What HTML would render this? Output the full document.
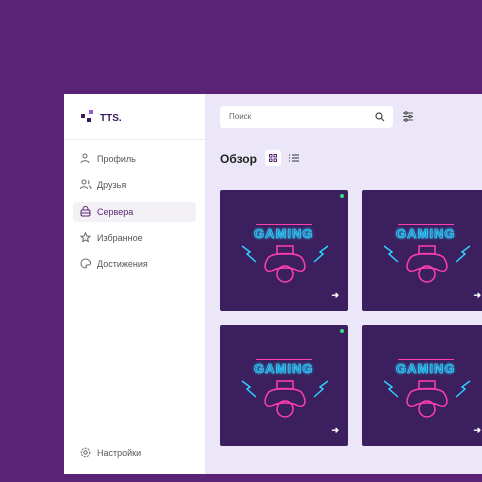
<!DOCTYPE html><html><head><style>
body{margin:0;width:482px;height:482px;background:#5b2376;position:relative;overflow:hidden;font-family:"Liberation Sans",sans-serif}
.panel{position:absolute;left:64px;top:94px;width:418px;height:380px;background:#ebe7f8;overflow:hidden}
.side{position:absolute;left:0;top:0;width:141px;height:380px;background:#fff}
.logo{position:absolute;left:17px;top:16px;height:14px;font-weight:bold;font-size:10px;color:#3c1a5a}
.logo i{position:absolute;width:4px;height:4px;background:#3c1a5a}
.hr{position:absolute;left:0;top:45px;width:141px;height:1px;background:#f0eef4}
.item{position:absolute;left:9px;width:123px;height:20px;font-size:9px;color:#555;line-height:20px}
.item span{position:absolute;left:24px}
.item svg{position:absolute;left:7px;top:4px}
.act{background:#f3f1f6;border-radius:4px;color:#5b2376}
.search{position:absolute;left:156px;top:12px;width:173px;height:22px;background:#fff;border-radius:3px;font-size:8px;color:#666;line-height:22px}
.card{position:absolute;width:128px;height:121px;background:#3b1f5e;border-radius:2px}
.dot{position:absolute;right:4px;top:4px;width:4px;height:4px;background:#2ee07a;border-radius:50%}
.arr{position:absolute;right:9px;bottom:10px;color:#fff;font-size:9px;font-weight:bold}
.g{position:absolute;left:34px;top:36px;color:#3a6fa8;font-size:13px;font-weight:bold;letter-spacing:1px;-webkit-text-stroke:0.8px #2ad0ff;text-shadow:0 0 3px #2ad0ff}
</style></head><body>
<div class="panel">
<div class="side">
<div class="logo"><i style="left:0;top:4px"></i><i style="left:8px;top:0;background:#9b59d0"></i><i style="left:6px;top:8px"></i><span style="position:absolute;left:19px;top:3px">TTS.</span></div>
<div class="hr"></div>
<div class="item" style="top:55px"><svg width="10" height="11" viewBox="0 0 10 11" fill="none" stroke="#666"><circle cx="5" cy="3" r="2"/><path d="M1 10c0-3 8-3 8 0"/></svg><span>Профиль</span></div>
<div class="item" style="top:81px"><svg width="12" height="11" viewBox="0 0 12 11" fill="none" stroke="#666"><circle cx="4" cy="3" r="2"/><path d="M0.5 10c0-3 7-3 7 0M8 1.5a2 2 0 0 1 0 3.5M9 7c1.5 .5 2 1.5 2 3"/></svg><span>Друзья</span></div>
<div class="item act" style="top:108px"><svg width="11" height="11" viewBox="0 0 11 11" fill="none" stroke="#5b2376"><rect x="1" y="4" width="9" height="6" rx="1.5"/><path d="M3 4V3a2.5 2.5 0 0 1 5 0v1M1 7h9"/></svg><span>Сервера</span></div>
<div class="item" style="top:134px"><svg width="11" height="11" viewBox="0 0 11 11" fill="none" stroke="#666"><path d="M5.5 1l1.4 3 3.1.3-2.4 2.1.7 3.1-2.8-1.6-2.8 1.6.7-3.1L1 4.3l3.1-.3z"/></svg><span>Избранное</span></div>
<div class="item" style="top:160px"><svg width="11" height="11" viewBox="0 0 11 11" fill="none" stroke="#666"><path d="M5.5 1a4.5 4.5 0 1 0 0 9c1 0 1-1 .5-1.5s0-1.5 1-1.5h1.5a2 2 0 0 0 2-2C10.5 3 8.3 1 5.5 1z"/></svg><span>Достижения</span></div>
<div class="item" style="top:349px"><svg width="11" height="11" viewBox="0 0 11 11" fill="none" stroke="#666"><circle cx="5.5" cy="5.5" r="1.7"/><circle cx="5.5" cy="5.5" r="4.3" stroke-dasharray="2 1.2"/></svg><span>Настройки</span></div>
</div>
<div class="search"><span style="margin-left:9px">Поиск</span><svg style="position:absolute;right:8px;top:6px" width="10" height="10" viewBox="0 0 10 10" fill="none" stroke="#444" stroke-width="1.2"><circle cx="4" cy="4" r="3"/><path d="M6.3 6.3L9 9"/></svg></div>
<svg style="position:absolute;left:338px;top:17px" width="12" height="11" viewBox="0 0 12 11" stroke="#444" stroke-width="1.1"><path d="M1 2h10M1 5.5h10M1 9h10"/><circle cx="4" cy="2" r="1.2" fill="#ebe7f8"/><circle cx="8" cy="5.5" r="1.2" fill="#ebe7f8"/><circle cx="4" cy="9" r="1.2" fill="#ebe7f8"/></svg>
<div style="position:absolute;left:156px;top:58px;font-size:12px;font-weight:bold;color:#222">Обзор</div>
<div style="position:absolute;left:201px;top:56px;width:16px;height:16px;background:#fff;border-radius:3px"><svg style="position:absolute;left:4px;top:4px" width="8" height="8" viewBox="0 0 8 8" fill="none" stroke="#5b2376"><rect x=".5" y=".5" width="2.5" height="2.5"/><rect x="5" y=".5" width="2.5" height="2.5"/><rect x=".5" y="5" width="2.5" height="2.5"/><rect x="5" y="5" width="2.5" height="2.5"/></svg></div>
<svg style="position:absolute;left:225px;top:60px" width="10" height="8" viewBox="0 0 10 8" stroke="#333"><path d="M0 1h1M3 1h7M0 4h1M3 4h7M0 7h1M3 7h7"/></svg>
<div class="card" style="left:156px;top:96px"><div class="dot"></div><div style="position:absolute;left:36px;top:34px;width:56px;height:1px;background:#ff3fb0"></div><div class="g">GAMING</div><svg style="position:absolute;left:20px;top:52px" width="90" height="44" viewBox="0 0 90 44" fill="none" stroke-width="1.5"><path d="M2 4l8 6-3 2 9 8M88 4l-8 6 3 2-9 8" stroke="#2ad0ff"/><path d="M28 16c4-6 30-6 34 0 6 10 2 16-6 12-4-2-8-2-11-2s-7 0-11 2c-8 4-12-2-6-12z" stroke="#ff3fb0"/><rect x="37" y="4" width="16" height="8" stroke="#ff3fb0"/><circle cx="45" cy="32" r="8" stroke="#ff3fb0"/></svg><div class="arr">➜</div></div>
<div class="card" style="left:298px;top:96px"><div class="dot"></div><div style="position:absolute;left:36px;top:34px;width:56px;height:1px;background:#ff3fb0"></div><div class="g">GAMING</div><svg style="position:absolute;left:20px;top:52px" width="90" height="44" viewBox="0 0 90 44" fill="none" stroke-width="1.5"><path d="M2 4l8 6-3 2 9 8M88 4l-8 6 3 2-9 8" stroke="#2ad0ff"/><path d="M28 16c4-6 30-6 34 0 6 10 2 16-6 12-4-2-8-2-11-2s-7 0-11 2c-8 4-12-2-6-12z" stroke="#ff3fb0"/><rect x="37" y="4" width="16" height="8" stroke="#ff3fb0"/><circle cx="45" cy="32" r="8" stroke="#ff3fb0"/></svg><div class="arr">➜</div></div>
<div class="card" style="left:156px;top:231px"><div class="dot"></div><div style="position:absolute;left:36px;top:34px;width:56px;height:1px;background:#ff3fb0"></div><div class="g">GAMING</div><svg style="position:absolute;left:20px;top:52px" width="90" height="44" viewBox="0 0 90 44" fill="none" stroke-width="1.5"><path d="M2 4l8 6-3 2 9 8M88 4l-8 6 3 2-9 8" stroke="#2ad0ff"/><path d="M28 16c4-6 30-6 34 0 6 10 2 16-6 12-4-2-8-2-11-2s-7 0-11 2c-8 4-12-2-6-12z" stroke="#ff3fb0"/><rect x="37" y="4" width="16" height="8" stroke="#ff3fb0"/><circle cx="45" cy="32" r="8" stroke="#ff3fb0"/></svg><div class="arr">➜</div></div>
<div class="card" style="left:298px;top:231px"><div class="dot"></div><div style="position:absolute;left:36px;top:34px;width:56px;height:1px;background:#ff3fb0"></div><div class="g">GAMING</div><svg style="position:absolute;left:20px;top:52px" width="90" height="44" viewBox="0 0 90 44" fill="none" stroke-width="1.5"><path d="M2 4l8 6-3 2 9 8M88 4l-8 6 3 2-9 8" stroke="#2ad0ff"/><path d="M28 16c4-6 30-6 34 0 6 10 2 16-6 12-4-2-8-2-11-2s-7 0-11 2c-8 4-12-2-6-12z" stroke="#ff3fb0"/><rect x="37" y="4" width="16" height="8" stroke="#ff3fb0"/><circle cx="45" cy="32" r="8" stroke="#ff3fb0"/></svg><div class="arr">➜</div></div>
</div>
</body></html>
